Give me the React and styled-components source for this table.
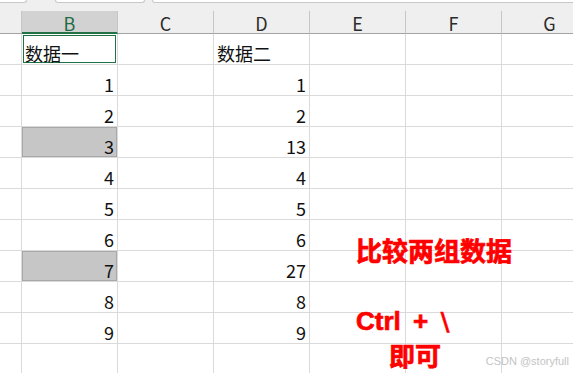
import React from "react";
import styled, { createGlobalStyle } from "styled-components";

const GlobalStyle = createGlobalStyle`
  html, body { margin: 0; padding: 0; background: #ffffff; }
  body { overflow: hidden; }
  * { box-sizing: border-box; }
`;

const Page = styled.div`
  position: relative;
  width: 573px;
  height: 373px;
  overflow: hidden;
  background: #ffffff;
  font-family: "Noto Sans CJK SC", "Noto Sans", sans-serif;
`;

const TopBand = styled.div`
  height: 11px;
  background: #efefef;
  display: flex;
  align-items: flex-start;
`;

const BarBox = styled.div`
  height: 3px;
  background: #ffffff;
  border: 1px solid #c8c8c8;
  border-top: none;
  border-radius: 0 0 5px 5px;
  margin-left: ${(p) => p.$ml}px;
  width: ${(p) => (p.$w ? `${p.$w}px` : "auto")};
  flex: ${(p) => (p.$w ? "none" : "1")};
  margin-right: ${(p) => (p.$w ? 0 : -10)}px;
`;

const Sheet = styled.div`
  display: grid;
  grid-template-columns: 22px repeat(6, 96px);
  grid-template-rows: 23px;
  grid-auto-rows: 31px;
  width: max-content;
`;

const HeadCell = styled.div`
  background: ${(p) => (p.$selected ? "#d2d2d2" : "#efefef")};
  border-right: 1px solid #c6c6c6;
  border-bottom: ${(p) => (p.$selected ? "2px solid #217346" : "1px solid #a3a3a3")};
  display: flex;
  align-items: center;
  justify-content: center;
  padding-top: ${(p) => (p.$selected ? 3 : 2)}px;
  font-size: 18px;
  line-height: 18px;
  color: ${(p) => (p.$selected ? "#1f6b43" : "#2b2b2b")};
`;

const Cell = styled.div`
  border-right: 1px solid #dadada;
  border-bottom: 1px solid #dadada;
  display: flex;
  align-items: flex-end;
  justify-content: ${(p) => (p.$text ? "flex-start" : "flex-end")};
  padding: 0 ${(p) => (p.$text ? 0 : 3)}px 2px ${(p) => (p.$text ? 3 : 0)}px;
  font-size: 18px;
  line-height: 18px;
  color: #111111;
  white-space: nowrap;
  background: ${(p) => (p.$variant === "mark" ? "#c6c6c6" : "transparent")};
  box-shadow: ${(p) =>
    p.$variant === "active"
      ? "inset 0 0 0 1px #ffffff, inset 0 0 0 2px #217346"
      : p.$variant === "mark"
      ? "inset 0 0 0 1px #a8a8a8"
      : "none"};
`;

const Note = styled.div`
  position: absolute;
  left: ${(p) => p.$x}px;
  top: ${(p) => p.$y}px;
  color: #ff0000;
  font-weight: 700;
  font-size: 26px;
  line-height: 26px;
  white-space: nowrap;
  -webkit-text-stroke: 0.7px #ff0000;
  font-family: ${(p) =>
    p.$latin
      ? '"Liberation Sans", Arial, sans-serif'
      : '"Noto Sans CJK SC", sans-serif'};
  word-spacing: ${(p) => (p.$latin ? 5 : 0)}px;
`;

const Slash = styled.span`
  font-family: "DejaVu Sans", sans-serif;
  font-size: 25px;
  -webkit-text-stroke: 0.3px #ff0000;
`;

const Watermark = styled.div`
  position: absolute;
  right: 4px;
  top: 356px;
  font-family: "Liberation Sans", Arial, sans-serif;
  font-size: 11px;
  line-height: 11px;
  color: #c4c4c4;
  white-space: nowrap;
`;

const columns = ["", "B", "C", "D", "E", "F", "G"];

const rows = [
  { b: "数据一", d: "数据二", text: true, active: true },
  { b: "1", d: "1" },
  { b: "2", d: "2" },
  { b: "3", d: "13", mark: true },
  { b: "4", d: "4" },
  { b: "5", d: "5" },
  { b: "6", d: "6" },
  { b: "7", d: "27", mark: true },
  { b: "8", d: "8" },
  { b: "9", d: "9" },
  { b: "", d: "" },
];

export default function App() {
  return (
    <>
      <GlobalStyle />
      <Page>
        <TopBand>
          <BarBox $ml={-6} $w={33} />
          <BarBox $ml={28} $w={90} />
          <BarBox $ml={7} />
        </TopBand>
        <Sheet>
          {columns.map((c, i) => (
            <HeadCell key={`h${i}`} $selected={c === "B"}>
              {c}
            </HeadCell>
          ))}
          {rows.map((r, ri) => (
            <React.Fragment key={ri}>
              <Cell />
              <Cell
                $text={r.text}
                $variant={r.active ? "active" : r.mark ? "mark" : undefined}
              >
                {r.b}
              </Cell>
              <Cell />
              <Cell $text={r.text}>{r.d}</Cell>
              <Cell />
              <Cell />
              <Cell />
            </React.Fragment>
          ))}
        </Sheet>
        <Note $x={356} $y={237}>比较两组数据</Note>
        <Note $x={356} $y={308} $latin>
          Ctrl + <Slash>\</Slash>
        </Note>
        <Note $x={389} $y={342}>即可</Note>
        <Watermark>CSDN @storyfull</Watermark>
      </Page>
    </>
  );
}
